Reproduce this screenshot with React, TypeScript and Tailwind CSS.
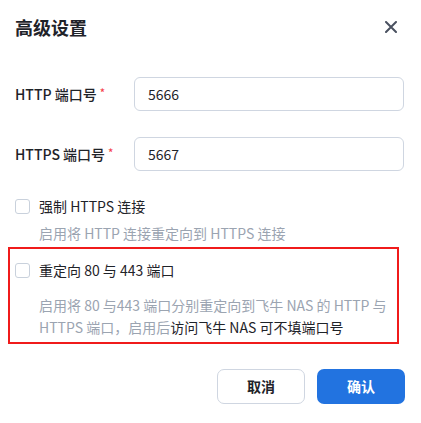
import React from "react";

const font = { fontFamily: '"Noto Sans CJK SC", "Noto Sans", sans-serif' };

function Checkbox() {
  return <span className="block h-[15px] w-[15px] shrink-0 rounded-[3px] border border-[#c9d1dc] bg-white" />;
}

function PortRow({ label, value }: { label: string; value: string }) {
  return (
    <div className="flex h-[34px] items-center">
      <div className="flex w-[119px] items-center text-[14px] font-medium text-[#1f2329]">
        <span>{label}</span>
        <span className="ml-[3px] -mt-[4px] text-[11px] leading-[14px] text-[#f5424d]">*</span>
      </div>
      <div className="flex h-[34px] flex-1 items-center rounded-[6px] border border-[#cfd6e1] pl-[13px] text-[14px] text-[#1f2329]">
        {value}
      </div>
    </div>
  );
}

export default function App() {
  return (
    <div className="h-[423px] w-[421px] overflow-hidden bg-white" style={font}>
      <header className="flex h-[54px] items-center justify-between pl-[15px] pr-[24px]">
        <h1 className="text-[18px] font-bold leading-[26px] text-[#1f2329]">高级设置</h1>
        <button className="flex h-[12px] w-[12px] items-center justify-center">
          <svg width="12" height="12" viewBox="0 0 12 12" fill="none">
            <path d="M1 1L11 11M11 1L1 11" stroke="#4a5160" strokeWidth="2" strokeLinecap="round" />
          </svg>
        </button>
      </header>

      <div className="mt-[23px] pl-[15px] pr-[17px]">
        <PortRow label="HTTP 端口号" value="5666" />
        <div className="mt-[26px]">
          <PortRow label="HTTPS 端口号" value="5667" />
        </div>

        <div className="mt-[24px] flex h-[22px] items-center gap-[9px]">
          <Checkbox />
          <span className="text-[14px] text-[#1f2329]">强制 HTTPS 连接</span>
        </div>
        <p className="mt-[5px] pl-[24px] text-[14px] leading-[22px] text-[#9ba4b1]">
          启用将 HTTP 连接重定向到 HTTPS 连接
        </p>
      </div>

      <div className="ml-[8px] mt-[3px] w-[391px] border-2 border-[#f01b1b] pb-[4px] pl-[5px] pt-[10px]">
        <div className="flex h-[22px] items-center gap-[9px]">
          <Checkbox />
          <span className="text-[14px] text-[#1f2329]">重定向 80 与 443 端口</span>
        </div>
        <p className="mt-[13px] pl-[24px] text-[14px] leading-[22px] text-[#9ba4b1]">
          <span className="whitespace-nowrap">启用将 80 与443 端口分别重定向到飞牛 NAS 的 HTTP 与</span>
          <br />
          <span className="whitespace-nowrap">
            HTTPS 端口，启用后<span className="text-[#1f2329]">访问飞牛 NAS 可不填端口号</span>
          </span>
        </p>
      </div>

      <div className="mt-[25px] flex justify-end gap-[12px] pr-[16px]">
        <button className="h-[35px] w-[88px] rounded-[7px] border border-[#cfd6e1] bg-white text-[14px] font-bold text-[#1f2329]">
          取消
        </button>
        <button className="h-[35px] w-[88px] rounded-[7px] bg-[#2273e0] text-[14px] font-bold text-white">
          确认
        </button>
      </div>
    </div>
  );
}
